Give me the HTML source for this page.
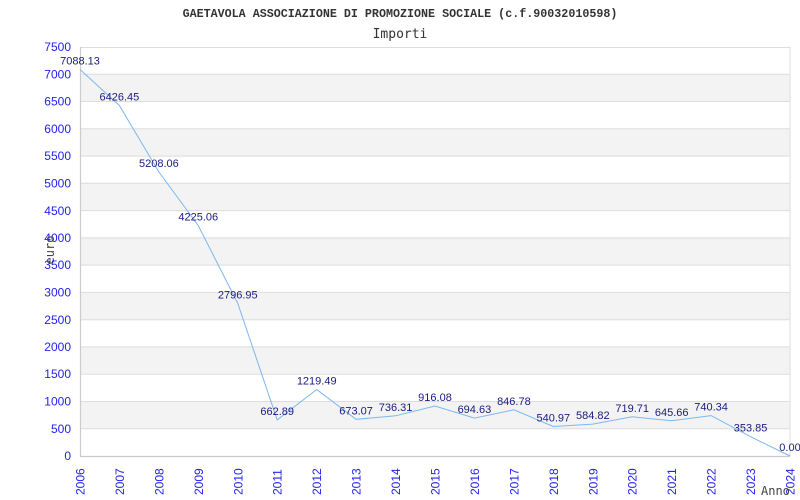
<!DOCTYPE html>
<html><head><meta charset="utf-8"><style>body{margin:0;background:#fff}svg{display:block}</style></head><body>
<svg width="800" height="500" xmlns="http://www.w3.org/2000/svg">
<rect width="800" height="500" fill="#fff"/>
<text x="400" y="17" text-anchor="middle" font-family="Liberation Mono, monospace" font-size="11.7" font-weight="bold" fill="#333">GAETAVOLA ASSOCIAZIONE DI PROMOZIONE SOCIALE (c.f.90032010598)</text>
<text x="400" y="38" text-anchor="middle" font-family="DejaVu Sans Mono, monospace" font-size="13" fill="#333">Importi</text>
<g fill="#f3f3f3">
<rect x="80" y="401.5" width="710" height="27.2"/>
<rect x="80" y="346.9" width="710" height="27.3"/>
<rect x="80" y="292.4" width="710" height="27.3"/>
<rect x="80" y="237.9" width="710" height="27.2"/>
<rect x="80" y="183.3" width="710" height="27.3"/>
<rect x="80" y="128.8" width="710" height="27.3"/>
<rect x="80" y="74.3" width="710" height="27.2"/>
</g>
<g stroke="#ddd" stroke-width="1">
<line x1="80" x2="790" y1="428.7" y2="428.7"/><line x1="80" x2="790" y1="401.5" y2="401.5"/>
<line x1="80" x2="790" y1="374.2" y2="374.2"/><line x1="80" x2="790" y1="346.9" y2="346.9"/>
<line x1="80" x2="790" y1="319.7" y2="319.7"/><line x1="80" x2="790" y1="292.4" y2="292.4"/>
<line x1="80" x2="790" y1="265.1" y2="265.1"/><line x1="80" x2="790" y1="237.9" y2="237.9"/>
<line x1="80" x2="790" y1="210.6" y2="210.6"/><line x1="80" x2="790" y1="183.3" y2="183.3"/>
<line x1="80" x2="790" y1="156.1" y2="156.1"/><line x1="80" x2="790" y1="128.8" y2="128.8"/>
<line x1="80" x2="790" y1="101.5" y2="101.5"/><line x1="80" x2="790" y1="74.3" y2="74.3"/>
<line x1="80" x2="790" y1="47.5" y2="47.5"/>
<line x1="790" x2="790" y1="47" y2="456"/>
</g>
<g stroke="#ccc" stroke-width="1.2">
<line x1="80.5" x2="80.5" y1="47" y2="456.5"/><line x1="80" x2="790" y1="456.5" y2="456.5"/>
</g>
<g font-family="Liberation Sans, sans-serif" font-size="12" fill="#2222ee" text-anchor="end">
<text x="71" y="460">0</text><text x="71" y="433">500</text><text x="71" y="405.5">1000</text>
<text x="71" y="378">1500</text><text x="71" y="351">2000</text><text x="71" y="324">2500</text>
<text x="71" y="296.5">3000</text><text x="71" y="269">3500</text><text x="71" y="242">4000</text>
<text x="71" y="215">4500</text><text x="71" y="187.5">5000</text><text x="71" y="160">5500</text>
<text x="71" y="133">6000</text><text x="71" y="105.5">6500</text><text x="71" y="78.5">7000</text>
<text x="71" y="51">7500</text>
</g>
<text transform="translate(54,250) rotate(-90)" text-anchor="middle" font-family="DejaVu Sans Mono, monospace" font-size="12" fill="#444">euro</text>
<text x="761" y="495" font-family="DejaVu Sans Mono, monospace" font-size="12" fill="#444">Anno</text>
<g font-family="Liberation Sans, sans-serif" font-size="12" fill="#2222ee">
<text transform="translate(84.5,495) rotate(-90)">2006</text>
<text transform="translate(123.9,495) rotate(-90)">2007</text>
<text transform="translate(163.4,495) rotate(-90)">2008</text>
<text transform="translate(202.8,495) rotate(-90)">2009</text>
<text transform="translate(242.3,495) rotate(-90)">2010</text>
<text transform="translate(281.7,495) rotate(-90)">2011</text>
<text transform="translate(321.2,495) rotate(-90)">2012</text>
<text transform="translate(360.6,495) rotate(-90)">2013</text>
<text transform="translate(400.1,495) rotate(-90)">2014</text>
<text transform="translate(439.5,495) rotate(-90)">2015</text>
<text transform="translate(478.9,495) rotate(-90)">2016</text>
<text transform="translate(518.4,495) rotate(-90)">2017</text>
<text transform="translate(557.8,495) rotate(-90)">2018</text>
<text transform="translate(597.3,495) rotate(-90)">2019</text>
<text transform="translate(636.7,495) rotate(-90)">2020</text>
<text transform="translate(676.2,495) rotate(-90)">2021</text>
<text transform="translate(715.6,495) rotate(-90)">2022</text>
<text transform="translate(755.1,495) rotate(-90)">2023</text>
<text transform="translate(794.5,495) rotate(-90)">2024</text>
</g>
<polyline fill="none" stroke="#7ab8f0" stroke-width="1" points="80,69.5 119.4,105.5 158.9,172 198.3,225.6 237.8,303.5 277.2,419.9 316.7,389.5 356.1,419.3 395.6,415.8 435,406 474.4,418.1 513.9,409.8 553.3,426.5 592.8,424.1 632.2,416.8 671.7,420.8 711.1,415.6 750.6,436.7 790,456"/>
<g font-family="Liberation Sans, sans-serif" font-size="11" fill="#1a1a80" text-anchor="middle">
<text x="80" y="64.5">7088.13</text><text x="119.4" y="100.5">6426.45</text>
<text x="158.9" y="167">5208.06</text><text x="198.3" y="220.6">4225.06</text>
<text x="237.8" y="298.5">2796.95</text><text x="277.2" y="414.9">662.89</text>
<text x="316.7" y="384.5">1219.49</text><text x="356.1" y="414.3">673.07</text>
<text x="395.6" y="410.8">736.31</text><text x="435" y="401">916.08</text>
<text x="474.4" y="413.1">694.63</text><text x="513.9" y="404.8">846.78</text>
<text x="553.3" y="421.5">540.97</text><text x="592.8" y="419.1">584.82</text>
<text x="632.2" y="411.8">719.71</text><text x="671.7" y="415.8">645.66</text>
<text x="711.1" y="410.6">740.34</text><text x="750.6" y="431.7">353.85</text>
<text x="790" y="451">0.00</text>
</g>
</svg>
</body></html>
